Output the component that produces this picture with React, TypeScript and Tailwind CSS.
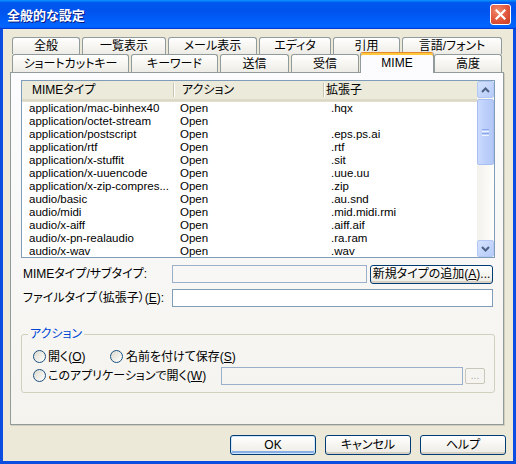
import React from 'react'

const TABS_TOP: { label: string; cls: string }[] = [
  { label: '全般', cls: 'w-[68px]' },
  { label: '一覧表示', cls: 'w-[84px] ml-[2px]' },
  { label: 'メール表示', cls: 'w-[89px] ml-[2px]' },
  { label: 'エディタ', cls: 'w-[72px] ml-[2px]' },
  { label: '引用', cls: 'w-[67px] ml-[2px]' },
  { label: '言語/フォント', cls: 'w-[100px] ml-[2px]' },
]

const TABS_BOTTOM: { label: string; cls: string; active?: boolean }[] = [
  { label: 'ショートカットキー', cls: 'w-[117px]' },
  { label: 'キーワード', cls: 'w-[87px] ml-[2px]' },
  { label: '送信', cls: 'w-[69px] ml-[2px]' },
  { label: '受信', cls: 'w-[68px] ml-[2px]' },
  { label: 'MIME', cls: 'w-[74px] ml-[1px]', active: true },
  { label: '高度', cls: 'w-[68px]' },
]

const ROWS: [string, string, string][] = [
  ['application/mac-binhex40', 'Open', '.hqx'],
  ['application/octet-stream', 'Open', ''],
  ['application/postscript', 'Open', '.eps.ps.ai'],
  ['application/rtf', 'Open', '.rtf'],
  ['application/x-stuffit', 'Open', '.sit'],
  ['application/x-uuencode', 'Open', '.uue.uu'],
  ['application/x-zip-compres...', 'Open', '.zip'],
  ['audio/basic', 'Open', '.au.snd'],
  ['audio/midi', 'Open', '.mid.midi.rmi'],
  ['audio/x-aiff', 'Open', '.aiff.aif'],
  ['audio/x-pn-realaudio', 'Open', '.ra.ram'],
  ['audio/x-wav', 'Open', '.wav'],
]

function Tab({ label, cls, active }: { label: string; cls: string; active?: boolean }) {
  if (active) {
    return (
      <div
        className={`${cls} relative z-10 h-[21px] -mb-[1px] flex items-center justify-center rounded-t-[3px] border-x border-t border-x-[#919B9C] border-t-[#E68B2C] bg-[#FCFCFE] shadow-[inset_0_2px_0_#FFC73C] pb-[1px]`}
      >
        {label}
      </div>
    )
  }
  return (
    <div
      className={`${cls} h-full flex items-center justify-center rounded-t-[3px] border-x border-t border-[#919B9C] bg-[linear-gradient(to_bottom,#FFFFFF,#F3F2ED_70%,#ECEBE6)]`}
    >
      {label}
    </div>
  )
}

function Chevron({ up }: { up?: boolean }) {
  return (
    <svg width="9" height="6" viewBox="0 0 9 6">
      <path
        d={up ? 'M1 5 L4.5 1.5 L8 5' : 'M1 1 L4.5 4.5 L8 1'}
        fill="none"
        stroke="#4D6185"
        strokeWidth="2"
      />
    </svg>
  )
}

function Radio() {
  return (
    <span className="w-[13px] h-[13px] shrink-0 rounded-full border border-[#1C5180] bg-[linear-gradient(135deg,#DCD9CD,#FFFFFF)]" />
  )
}

function Button({ children, cls, main }: { children: React.ReactNode; cls: string; main?: boolean }) {
  return (
    <button
      className={`${cls} flex items-center justify-center rounded-[3px] border border-[#003C74] bg-[linear-gradient(to_bottom,#FFFFFF,#F4F3EE_60%,#ECEBE6)] ${
        main
          ? 'shadow-[inset_0_0_0_1px_#CEE7FF,inset_0_-2px_0_1px_#89ADE4]'
          : 'shadow-[inset_0_-2px_0_#D6D0C5]'
      }`}
    >
      {children}
    </button>
  )
}

export default function App() {
  return (
    <div className="w-[516px] h-[464px] flex flex-col overflow-hidden font-['Liberation_Sans','Noto_Sans_CJK_JP',sans-serif] [font-feature-settings:'palt'] text-[12px] leading-[14px] text-black">
      {/* title bar */}
      <div className="h-[29px] shrink-0 flex items-center justify-between pl-[7px] pr-[5px] bg-[linear-gradient(to_bottom,#0997FF_0%,#0058EE_9%,#0053EE_40%,#0064FF_86%,#0066FF_92%,#005BFF_95%,#003DD7_97%,#003DD7_100%)]">
        <span className="text-white font-bold text-[13px] font-['Noto_Sans_CJK_JP',sans-serif] [text-shadow:1px_1px_0_#0A1883]">
          全般的な設定
        </span>
        <div className="w-[21px] h-[21px] rounded-[3px] border border-white bg-[radial-gradient(circle_at_35%_30%,#F08A6C,#E0553B_55%,#C43C24)] flex items-center justify-center">
          <svg width="11" height="11" viewBox="0 0 11 11">
            <path d="M1.5 1.5 L9.5 9.5 M9.5 1.5 L1.5 9.5" stroke="white" strokeWidth="2.2" strokeLinecap="square" />
          </svg>
        </div>
      </div>

      {/* body */}
      <div className="flex-1 flex flex-col bg-[#ECE9D8] border-x-[3px] border-b-[3px] border-[#0A4DE0] pl-[7px] pr-[7px] pt-[8px]">
        {/* tabs */}
        <div className="ml-[2px] flex h-[17px]">
          {TABS_TOP.map((t) => (
            <Tab key={t.label} label={t.label} cls={t.cls} />
          ))}
        </div>
        <div className="ml-[2px] flex items-end h-[18px]">
          {TABS_BOTTOM.map((t) => (
            <Tab key={t.label} label={t.label} cls={t.cls} active={t.active} />
          ))}
        </div>

        {/* panel */}
        <div className="w-[494px] h-[353px] border border-[#919B9C] bg-[linear-gradient(to_bottom,#FCFCFE,#F4F3EE)] shadow-[1px_1px_0_#D0CEBF] pl-[10px] pt-[7px]">
          {/* list view */}
          <div className="w-[474px] h-[178px] border border-[#7F9DB9] bg-white flex">
            <div className="flex-1 flex flex-col overflow-hidden">
              <div className="h-[20px] shrink-0 flex items-center bg-[#EBEADB] border-b-2 border-[#DDD9C8] shadow-[0_1px_0_#E2DECD]">
                <div className="w-[151px] pl-[10px]">MIMEタイプ</div>
                <div className="w-[2px] h-[14px] border-l border-r border-l-[#C7C5B2] border-r-white" />
                <div className="w-[148px] pl-[7px]">アクション</div>
                <div className="w-[2px] h-[14px] border-l border-r border-l-[#C7C5B2] border-r-white" />
                <div className="flex-1 pl-[1px]">拡張子</div>
              </div>
              <div className="pt-[1px] text-[11.5px]">
                {ROWS.map(([type, action, ext]) => (
                  <div key={type} className="h-[13px] leading-[13px] flex whitespace-nowrap">
                    <div className="w-[151px] pl-[7px]">{type}</div>
                    <div className="w-[150px] pl-[7px]">{action}</div>
                    <div className="flex-1 pl-[8px]">{ext}</div>
                  </div>
                ))}
              </div>
            </div>
            {/* scrollbar */}
            <div className="w-[17px] flex flex-col bg-[linear-gradient(to_right,#F3F1EC,#FEFEFB)]">
              <div className="h-[17px] shrink-0 rounded-[2px] border border-[#B4C8F6] bg-[linear-gradient(135deg,#D4E2FE,#B6CBF8)] flex items-center justify-center">
                <Chevron up />
              </div>
              <div className="flex-1 flex flex-col">
                <div className="mt-[1px] h-[66px] rounded-[2px] border border-[#A8BEF0] bg-[linear-gradient(to_right,#CBDAFD,#BCCFFB_50%,#B3C8F6)] flex flex-col items-center justify-center gap-[1px]">
                  <span className="w-[7px] h-[1px] bg-[#8CA8E8]" />
                  <span className="w-[7px] h-[1px] bg-[#EEF4FF]" />
                  <span className="w-[7px] h-[1px] bg-[#8CA8E8]" />
                  <span className="w-[7px] h-[1px] bg-[#EEF4FF]" />
                </div>
              </div>
              <div className="h-[17px] shrink-0 rounded-[2px] border border-[#B4C8F6] bg-[linear-gradient(135deg,#D4E2FE,#B6CBF8)] flex items-center justify-center">
                <Chevron />
              </div>
            </div>
          </div>

          {/* fields */}
          <div className="mt-[6px] h-[20px] flex items-center">
            <div className="w-[149px] ml-[2px]">MIMEタイプ/サブタイプ:</div>
            <div className="w-[195px] h-[18px] border border-[#9AAFCA]" />
            <Button cls="ml-[3px] w-[123px] h-[19px]">
              新規タイプの追加(<span className="underline">A</span>)...
            </Button>
          </div>
          <div className="mt-[4px] h-[20px] flex items-center">
            <div className="w-[149px] ml-[2px]">
              ファイルタイプ（拡張子）(<span className="underline">E</span>):
            </div>
            <div className="w-[321px] h-[18px] border border-[#7F9DB9] bg-white" />
          </div>

          {/* action group */}
          <fieldset className="mt-[19px] w-[474px] rounded-[3px] border border-[#D0D0BF]">
            <legend className="ml-[6px] px-[2px] leading-[14px] text-[#0046D5]">アクション</legend>
            <div className="pl-[11px] pt-[6px] pb-[7px]">
              <div className="h-[19px] flex items-center">
                <div className="w-[77px] flex items-center gap-[2px]">
                  <Radio />
                  <span>
                    開く(<span className="underline">O</span>)
                  </span>
                </div>
                <div className="flex items-center gap-[3px]">
                  <Radio />
                  <span>
                    名前を付けて保存(<span className="underline">S</span>)
                  </span>
                </div>
              </div>
              <div className="h-[19px] flex items-center">
                <div className="w-[188px] flex items-center gap-[2px]">
                  <Radio />
                  <span>
                    このアプリケーションで開く(<span className="underline">W</span>)
                  </span>
                </div>
                <div className="w-[242px] h-[18px] border border-[#9AAFCA]" />
                <div className="ml-[2px] w-[20px] h-[16px] rounded-[2px] border border-[#C9C7BA] flex items-center justify-center text-[#ACA899] text-[10px]">
                  ...
                </div>
              </div>
            </div>
          </fieldset>
        </div>

        {/* bottom buttons */}
        <div className="mt-[10px] flex justify-end gap-[9px]">
          <Button cls="w-[86px] h-[20px]" main>
            OK
          </Button>
          <Button cls="w-[86px] h-[20px]">キャンセル</Button>
          <Button cls="w-[86px] h-[20px]">ヘルプ</Button>
        </div>
      </div>
    </div>
  )
}
